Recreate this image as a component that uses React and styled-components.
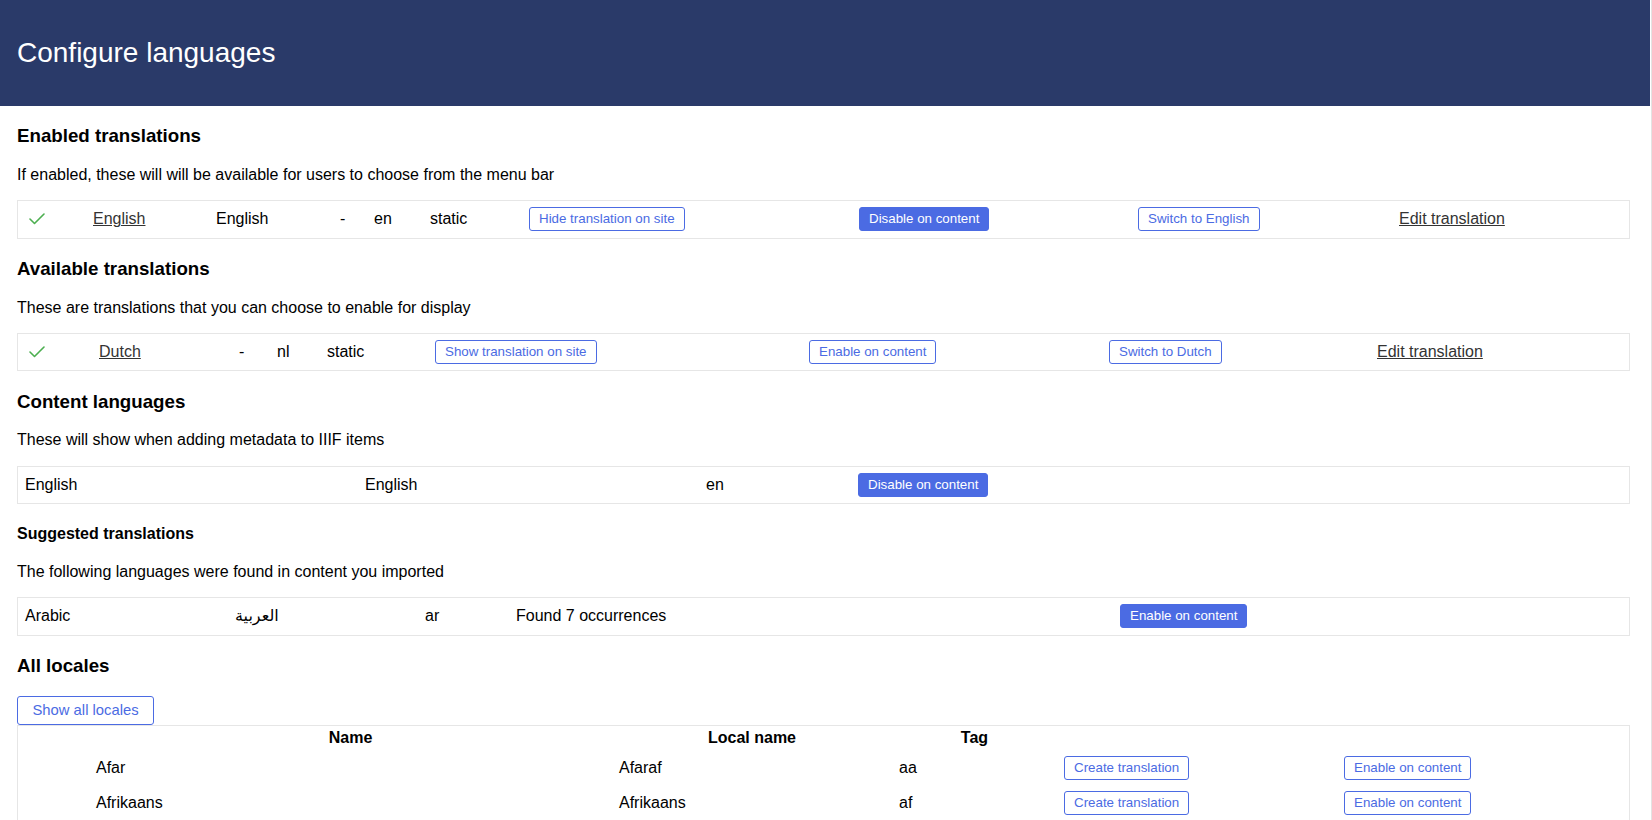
import React from 'react';
import styled, { createGlobalStyle } from 'styled-components';

// ------------- Styled components -------------
const GlobalStyle = createGlobalStyle`
  html {
    overflow: hidden;
  }
  body {
    margin: 0;
    background: #fff;
    color: #000;
    font-family: "Liberation Sans", Arial, "DejaVu Sans", sans-serif;
    border-right: 1px solid #e3e3e3;
  }
`;

const Page = styled.div`
  margin-right: 1px;
`;

const Header = styled.header`
  height: 106px;
  display: flex;
  align-items: center;
  padding-left: 17px;
  background-color: #2a3a69;
`;

const Title = styled.h1`
  margin: 0;
  font-size: 28px;
  font-weight: 400;
  line-height: 32px;
  color: #fff;
`;

const Content = styled.main`
  display: flex;
  flex-direction: column;
  padding: 0 20px 0 17px;
`;

const SectionTitle = styled.h3`
  margin: 19.2px 0 0;
  font-size: 18.72px;
  font-weight: 700;
  line-height: 22px;
`;

const SubTitle = styled.h4`
  margin: 21px 0 0;
  font-size: 16px;
  font-weight: 700;
  line-height: 18px;
`;

const Text = styled.p`
  margin: ${p => p.$gap || 18.8}px 0 0;
  font-size: 16px;
  line-height: 18px;
`;

const Row = styled.div`
  display: grid;
  grid-template-columns: ${p => p.$cols};
  align-items: center;
  box-sizing: border-box;
  height: 38.5px;
  margin-top: 16.2px;
  padding-left: ${p => p.$pad}px;
  border: 1px solid #e6e6e6;
  font-size: 16px;
  line-height: 18px;
`;

const Link = styled.a`
  color: #333;
  text-decoration: underline;
  cursor: pointer;
  justify-self: start;
`;

const Button = styled.button`
  justify-self: start;
  box-sizing: border-box;
  padding: 3px 9px;
  border: 1px solid #4b6be3;
  border-radius: 3px;
  background-color: ${p => (p.$filled ? '#4b6be3' : '#fff')};
  color: ${p => (p.$filled ? '#fff' : '#4b6be3')};
  font-family: inherit;
  font-size: 13.33px;
  line-height: 16px;
  white-space: nowrap;
  cursor: pointer;
`;

const BigButton = styled(Button)`
  align-self: flex-start;
  margin-top: 19px;
  padding: 5px 14.5px;
  font-size: 14.8px;
  line-height: 17px;
`;

const Table = styled.div`
  border: 1px solid #e6e6e6;
  border-bottom: none;
  padding-bottom: 10px;
  font-size: 16px;
  line-height: 18.4px;
`;

const TableRow = styled.div`
  display: grid;
  grid-template-columns: 71px 523px 280px 165px 280px 1fr;
  align-items: center;
`;

const HeadCell = styled.div`
  padding: 3px 7px;
  text-align: center;
  font-weight: 700;
`;

const Cell = styled.div`
  display: flex;
  padding: 5.5px 7px;
`;
// ---------- End styled components -----------

const Check = () => (
  <svg width="16" height="12" viewBox="0 0 16 12" fill="none">
    <polyline points="1,6 5.5,10.5 15,1" stroke="#4caf50" strokeWidth="1.6" strokeLinecap="round" strokeLinejoin="round" />
  </svg>
);

const locales = [
  { name: 'Afar', local: 'Afaraf', tag: 'aa' },
  { name: 'Afrikaans', local: 'Afrikaans', tag: 'af' },
];

export default function App() {
  return (
    <Page>
      <GlobalStyle />
      <Header>
        <Title>Configure languages</Title>
      </Header>

      <Content>
        <SectionTitle>Enabled translations</SectionTitle>
        <Text>If enabled, these will will be available for users to choose from the menu bar</Text>
        <Row $pad={11} $cols="64px 123px 124px 34px 56px 99px 330px 279px 261px 1fr">
          <Check />
          <Link>English</Link>
          <span>English</span>
          <span>-</span>
          <span>en</span>
          <span>static</span>
          <Button>Hide translation on site</Button>
          <Button $filled>Disable on content</Button>
          <Button>Switch to English</Button>
          <Link>Edit translation</Link>
        </Row>

        <SectionTitle>Available translations</SectionTitle>
        <Text>These are translations that you can choose to enable for display</Text>
        <Row $pad={11} $cols="70px 140px 38px 50px 108px 374px 300px 268px 1fr">
          <Check />
          <Link>Dutch</Link>
          <span>-</span>
          <span>nl</span>
          <span>static</span>
          <Button>Show translation on site</Button>
          <Button>Enable on content</Button>
          <Button>Switch to Dutch</Button>
          <Link>Edit translation</Link>
        </Row>

        <SectionTitle>Content languages</SectionTitle>
        <Text>These will show when adding metadata to IIIF items</Text>
        <Row $pad={7} $cols="340px 341px 152px 1fr">
          <span>English</span>
          <span>English</span>
          <span>en</span>
          <Button $filled>Disable on content</Button>
        </Row>

        <SubTitle>Suggested translations</SubTitle>
        <Text $gap={20}>The following languages were found in content you imported</Text>
        <Row $pad={7} $cols="210px 190px 91px 604px 1fr">
          <span>Arabic</span>
          <span>العربية</span>
          <span>ar</span>
          <span>Found 7 occurrences</span>
          <Button $filled>Enable on content</Button>
        </Row>

        <SectionTitle>All locales</SectionTitle>
        <BigButton>Show all locales</BigButton>
        <Table>
          <TableRow>
            <HeadCell />
            <HeadCell>Name</HeadCell>
            <HeadCell>Local name</HeadCell>
            <HeadCell>Tag</HeadCell>
            <HeadCell />
            <HeadCell />
          </TableRow>
          {locales.map(l => (
            <TableRow key={l.tag}>
              <Cell />
              <Cell>{l.name}</Cell>
              <Cell>{l.local}</Cell>
              <Cell>{l.tag}</Cell>
              <Cell><Button>Create translation</Button></Cell>
              <Cell><Button>Enable on content</Button></Cell>
            </TableRow>
          ))}
        </Table>
      </Content>
    </Page>
  );
}
